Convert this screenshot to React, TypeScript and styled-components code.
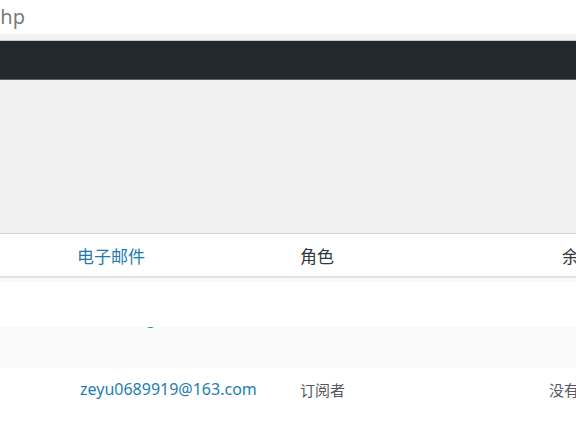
import React from "react";
import styled, { createGlobalStyle } from "styled-components";

const GlobalStyle = createGlobalStyle`
  html, body {
    margin: 0;
    padding: 0;
    background: #ffffff;
    overflow: hidden;
  }
  body {
    font-family: "Noto Sans", "Noto Sans CJK SC", sans-serif;
  }
`;

export default function App() {
  return (
    <Page>
      <GlobalStyle />
      <AddressBar>
        <Url>php</Url>
      </AddressBar>
      <BarGap />
      <AdminBar />
      <Backdrop />
      <Table>
        <HeadRow>
          <HeadLink>电子邮件</HeadLink>
          <HeadText>角色</HeadText>
          <HeadText>余</HeadText>
        </HeadRow>
        <Strip />
        <BlankRow />
        <StripedRow>
          <CutText>g</CutText>
        </StripedRow>
        <UserRow>
          <Email>zeyu0689919@163.com</Email>
          <Cell>订阅者</Cell>
          <Cell>没有</Cell>
        </UserRow>
      </Table>
    </Page>
  );
}

const Page = styled.div`
  width: 576px;
  height: 432px;
  overflow: hidden;
  display: flex;
  flex-direction: column;
  background: #ffffff;
`;

const AddressBar = styled.div`
  height: 34px;
  background: #ffffff;
  display: flex;
  align-items: center;
  overflow: hidden;
`;

const Url = styled.span`
  margin-left: -12px;
  margin-top: -2px;
  font-family: "Noto Sans", sans-serif;
  font-size: 20px;
  color: #7a7a7a;
`;

const BarGap = styled.div`
  height: 6px;
  background: #f1f1f1;
  border-bottom: 1px solid #c9c9c9;
`;

const AdminBar = styled.div`
  height: 38px;
  background: #23282d;
  border-bottom: 1px solid #5f6266;
`;

const Backdrop = styled.div`
  height: 153px;
  background: #f0f0f0;
`;

const Table = styled.div`
  display: flex;
  flex-direction: column;
  flex: 1;
  border-top: 1px solid #d6d6d6;
  background: #ffffff;
`;

const HeadRow = styled.div`
  height: 42px;
  display: grid;
  grid-template-columns: 77px 223px 262px auto;
  align-items: center;
  border-bottom: 2px solid #e2e2e2;
  font-family: "Noto Sans CJK SC", sans-serif;
  font-size: 17px;
  white-space: nowrap;
  & > :first-child {
    grid-column: 2;
  }
`;

const HeadLink = styled.span`
  color: #1d7aae;
`;

const HeadText = styled.span`
  color: #32373c;
`;

const Strip = styled.div`
  height: 4px;
  background: #f8f8f8;
`;

const BlankRow = styled.div`
  height: 45px;
  background: #ffffff;
`;

const StripedRow = styled.div`
  height: 41px;
  background: #f9f9f9;
  overflow: hidden;
  padding-left: 146px;
`;

const CutText = styled.div`
  margin-top: -16px;
  line-height: 15px;
  font-size: 16px;
  color: #2a86c0;
`;

const UserRow = styled.div`
  height: 42px;
  display: grid;
  grid-template-columns: 80px 220px 249px auto;
  align-items: center;
  white-space: nowrap;
  & > :first-child {
    grid-column: 2;
  }
`;

const Email = styled.span`
  font-family: "Noto Sans", sans-serif;
  font-size: 16px;
  color: #1f7db3;
`;

const Cell = styled.span`
  font-family: "Noto Sans CJK SC", sans-serif;
  font-size: 15px;
  color: #555a60;
`;
